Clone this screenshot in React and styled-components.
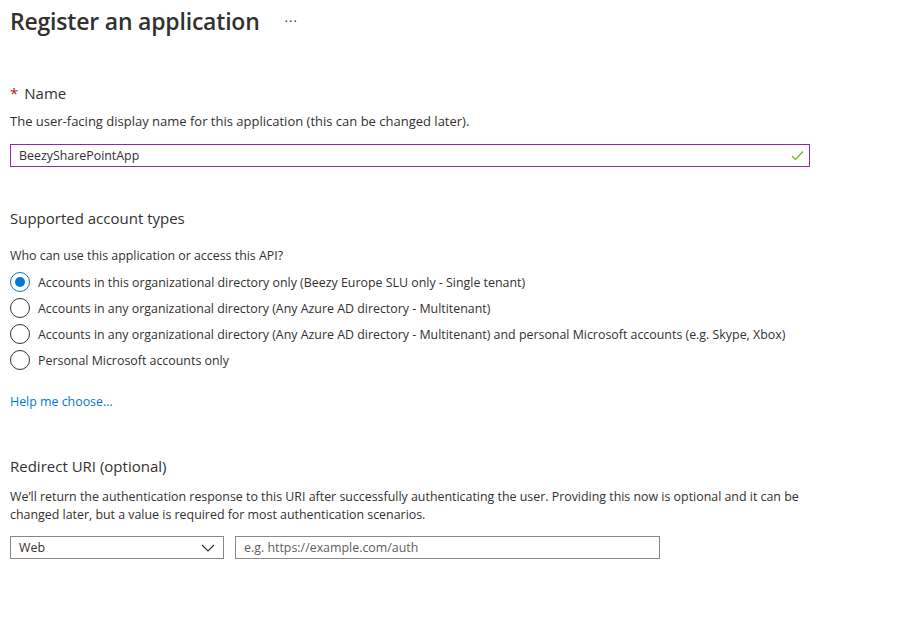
import styled, { createGlobalStyle } from "styled-components";

const Global = createGlobalStyle`
  body {
    margin: 0;
    background: #ffffff;
    font-family: "Open Sans", "Noto Sans", sans-serif;
    color: #323130;
  }
`;

const Page = styled.div`
  padding: 6px 10px 0 10px;
  width: 909px;
  box-sizing: border-box;
`;

const TitleRow = styled.div`
  display: flex;
  align-items: center;
  gap: 25px;
  height: 30px;
`;

const Title = styled.h1`
  margin: 0;
  font-size: 23px;
  font-weight: 600;
  color: #323130;
  letter-spacing: -0.2px;
`;

const More = styled.span`
  font-size: 13px;
  color: #323130;
  letter-spacing: 1px;
  margin-top: -1px;
`;

const Section = styled.section`
  margin-top: ${(p) => p.$top}px;
`;

const Heading = styled.div`
  font-size: 15px;
  line-height: 20px;
  color: #323130;
`;

const Star = styled.span`
  color: #a4262c;
  margin-right: 6px;
`;

const Desc = styled.p`
  margin: ${(p) => p.$mt || 9}px 0 0;
  font-size: ${(p) => p.$size || 12.4}px;
  line-height: 18px;
  color: #323130;
  max-width: 800px;
`;

const TextBox = styled.div`
  position: relative;
  margin-top: ${(p) => p.$mt || 0}px;
  width: ${(p) => p.$w}px;
  height: 23px;
  box-sizing: border-box;
  border: 1px solid ${(p) => (p.$active ? "#8a2da5" : "#8a8886")};
  display: flex;
  align-items: center;
  padding: 0 8px;
  font-size: 12.4px;
  color: ${(p) => (p.$placeholder ? "#605e5c" : "#323130")};
`;

const Check = styled.svg`
  position: absolute;
  right: 5px;
  top: 5px;
`;

const RadioList = styled.div`
  margin-top: 7px;
  display: flex;
  flex-direction: column;
  gap: 6px;
`;

const RadioRow = styled.label`
  display: flex;
  align-items: center;
  gap: 8px;
  height: 20px;
  font-size: 12.4px;
  color: #323130;
`;

const Circle = styled.span`
  width: 20px;
  height: 20px;
  box-sizing: border-box;
  border-radius: 50%;
  border: 1px solid ${(p) => (p.$on ? "#0078d4" : "#323130")};
  display: flex;
  align-items: center;
  justify-content: center;
  flex-shrink: 0;

  &::after {
    content: "";
    width: 10px;
    height: 10px;
    border-radius: 50%;
    background: ${(p) => (p.$on ? "#0078d4" : "transparent")};
  }
`;

const HelpLink = styled.a`
  display: inline-block;
  margin-top: 23px;
  font-size: 12.4px;
  color: #0078d4;
  text-decoration: none;
`;

const UriRow = styled.div`
  margin-top: 12px;
  display: flex;
  gap: 11px;
`;

const Select = styled.div`
  width: 214px;
  height: 23px;
  box-sizing: border-box;
  border: 1px solid #8a8886;
  display: flex;
  align-items: center;
  justify-content: space-between;
  padding: 0 8px;
  font-size: 12.4px;
  color: #323130;
`;

const options = [
  ["Accounts in this organizational directory only (Beezy Europe SLU only - Single tenant)", true],
  ["Accounts in any organizational directory (Any Azure AD directory - Multitenant)", false],
  [
    "Accounts in any organizational directory (Any Azure AD directory - Multitenant) and personal Microsoft accounts (e.g. Skype, Xbox)",
    false,
  ],
  ["Personal Microsoft accounts only", false],
];

export default function App() {
  return (
    <Page>
      <Global />
      <TitleRow>
        <Title>Register an application</Title>
        <More>···</More>
      </TitleRow>

      <Section $top={47}>
        <Heading>
          <Star>*</Star>Name
        </Heading>
        <Desc $size={13}>The user-facing display name for this application (this can be changed later).</Desc>
        <TextBox $w={800} $mt={14} $active>
          BeezySharePointApp
          <Check width="13" height="11" viewBox="0 0 13 11">
            <path d="M1 6 L4.5 9.5 L12 1.5" fill="none" stroke="#6bb700" strokeWidth="1.2" />
          </Check>
        </TextBox>
      </Section>

      <Section $top={41}>
        <Heading>Supported account types</Heading>
        <Desc $mt={19}>Who can use this application or access this API?</Desc>
        <RadioList>
          {options.map(([label, on]) => (
            <RadioRow key={label}>
              <Circle $on={on} />
              {label}
            </RadioRow>
          ))}
        </RadioList>
        <HelpLink href="#">Help me choose...</HelpLink>
      </Section>

      <Section $top={45}>
        <Heading>Redirect URI (optional)</Heading>
        <Desc $mt={12}>
          We’ll return the authentication response to this URI after successfully authenticating the user.
          Providing this now is optional and it can be changed later, but a value is required for most
          authentication scenarios.
        </Desc>
        <UriRow>
          <Select>
            Web
            <svg width="14" height="8" viewBox="0 0 14 8">
              <path d="M1 1 L7 7 L13 1" fill="none" stroke="#323130" strokeWidth="1.2" />
            </svg>
          </Select>
          <TextBox $w={425} $placeholder>
            e.g. https://example.com/auth
          </TextBox>
        </UriRow>
      </Section>
    </Page>
  );
}
